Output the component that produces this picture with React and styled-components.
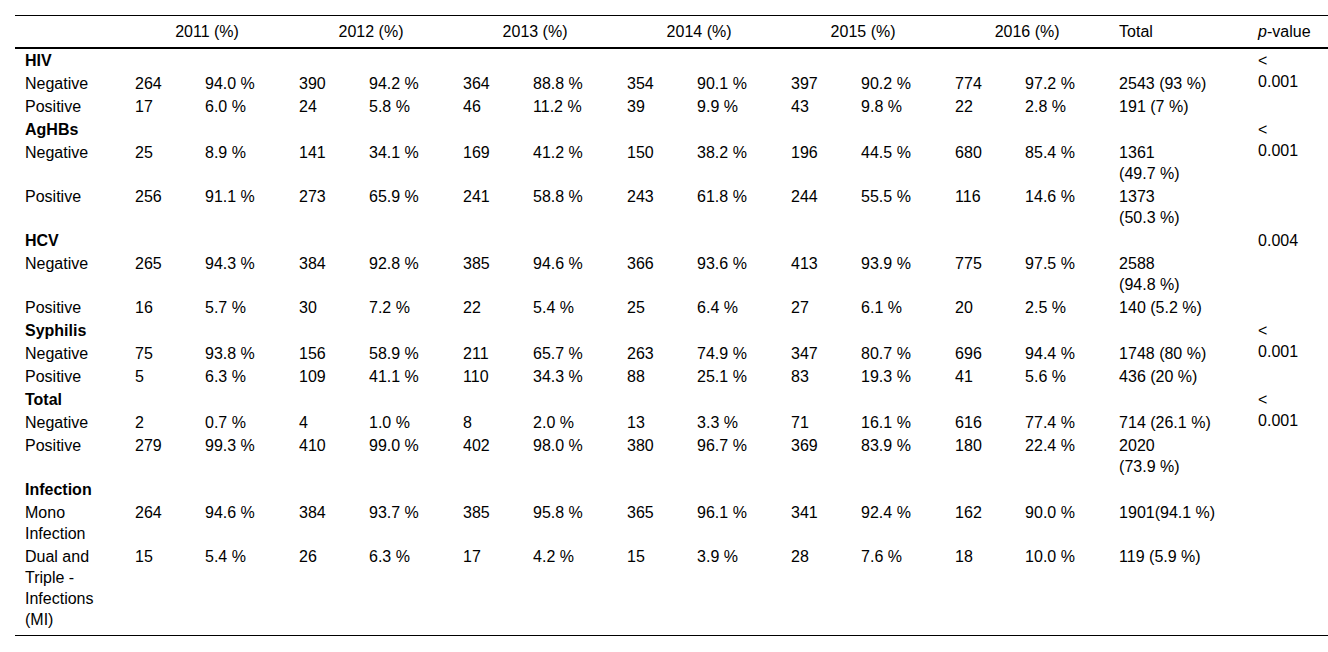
import React from 'react'
import styled, { createGlobalStyle } from 'styled-components'

const GlobalStyle = createGlobalStyle`
  html, body {
    margin: 0;
    padding: 0;
    background: #fff;
  }
  body {
    font-family: "Liberation Sans", Arial, sans-serif;
    color: #000;
  }
`

const Page = styled.div`
  padding: 15px 0 0 15px;
`

const Table = styled.table`
  width: 1313px;
  table-layout: fixed;
  border-collapse: collapse;
  font-size: 16px;
  line-height: 21px;
  border-top: 1px solid #000;
  border-bottom: 1px solid #000;
`

const HeadRow = styled.tr`
  border-bottom: 2px solid #000;
`

const Th = styled.th`
  font-weight: normal;
  text-align: ${({ center }) => (center ? 'center' : 'left')};
  padding: 5px 10px;
  white-space: nowrap;
`

const Td = styled.td`
  vertical-align: top;
  text-align: left;
  padding: 1px 10px ${({ last }) => (last ? '5px' : '1px')};
  white-space: pre-line;
  font-weight: ${({ bold }) => (bold ? 'bold' : 'normal')};
`

const years = ['2011', '2012', '2013', '2014', '2015', '2016']

const sections = [
  {
    title: 'HIV',
    p: '<\n0.001',
    rows: [
      ['Negative', '264', '94.0 %', '390', '94.2 %', '364', '88.8 %', '354', '90.1 %', '397', '90.2 %', '774', '97.2 %', '2543 (93 %)'],
      ['Positive', '17', '6.0 %', '24', '5.8 %', '46', '11.2 %', '39', '9.9 %', '43', '9.8 %', '22', '2.8 %', '191 (7 %)'],
    ],
  },
  {
    title: 'AgHBs',
    p: '<\n0.001',
    rows: [
      ['Negative', '25', '8.9 %', '141', '34.1 %', '169', '41.2 %', '150', '38.2 %', '196', '44.5 %', '680', '85.4 %', '1361\n(49.7 %)'],
      ['Positive', '256', '91.1 %', '273', '65.9 %', '241', '58.8 %', '243', '61.8 %', '244', '55.5 %', '116', '14.6 %', '1373\n(50.3 %)'],
    ],
  },
  {
    title: 'HCV',
    p: '0.004',
    rows: [
      ['Negative', '265', '94.3 %', '384', '92.8 %', '385', '94.6 %', '366', '93.6 %', '413', '93.9 %', '775', '97.5 %', '2588\n(94.8 %)'],
      ['Positive', '16', '5.7 %', '30', '7.2 %', '22', '5.4 %', '25', '6.4 %', '27', '6.1 %', '20', '2.5 %', '140 (5.2 %)'],
    ],
  },
  {
    title: 'Syphilis',
    p: '<\n0.001',
    rows: [
      ['Negative', '75', '93.8 %', '156', '58.9 %', '211', '65.7 %', '263', '74.9 %', '347', '80.7 %', '696', '94.4 %', '1748 (80 %)'],
      ['Positive', '5', '6.3 %', '109', '41.1 %', '110', '34.3 %', '88', '25.1 %', '83', '19.3 %', '41', '5.6 %', '436 (20 %)'],
    ],
  },
  {
    title: 'Total',
    p: '<\n0.001',
    rows: [
      ['Negative', '2', '0.7 %', '4', '1.0 %', '8', '2.0 %', '13', '3.3 %', '71', '16.1 %', '616', '77.4 %', '714 (26.1 %)'],
      ['Positive', '279', '99.3 %', '410', '99.0 %', '402', '98.0 %', '380', '96.7 %', '369', '83.9 %', '180', '22.4 %', '2020\n(73.9 %)'],
    ],
  },
  {
    title: 'Infection',
    p: '',
    rows: [
      ['Mono\nInfection', '264', '94.6 %', '384', '93.7 %', '385', '95.8 %', '365', '96.1 %', '341', '92.4 %', '162', '90.0 %', '1901(94.1 %)'],
      ['Dual and\nTriple -\nInfections\n(MI)', '15', '5.4 %', '26', '6.3 %', '17', '4.2 %', '15', '3.9 %', '28', '7.6 %', '18', '10.0 %', '119 (5.9 %)'],
    ],
  },
]

const App = () => {
  return (
    <Page>
      <GlobalStyle />
      <Table>
        <colgroup>
          <col style={{ width: 110 }} />
          {years.map((y) => (
            <React.Fragment key={y}>
              <col style={{ width: 70 }} />
              <col style={{ width: 94 }} />
            </React.Fragment>
          ))}
          <col style={{ width: 139 }} />
          <col style={{ width: 80 }} />
        </colgroup>
        <thead>
          <HeadRow>
            <Th />
            {years.map((y) => (
              <Th key={y} colSpan={2} center>
                {y} (%)
              </Th>
            ))}
            <Th>Total</Th>
            <Th>
              <i>p</i>-value
            </Th>
          </HeadRow>
        </thead>
        <tbody>
          {sections.map((s, si) => {
            const lastSection = si === sections.length - 1
            return (
              <React.Fragment key={s.title}>
                <tr>
                  <Td bold>{s.title}</Td>
                  <Td colSpan={13} />
                  <Td rowSpan={s.rows.length + 1} last={lastSection}>
                    {s.p}
                  </Td>
                </tr>
                {s.rows.map((r, ri) => {
                  const last = lastSection && ri === s.rows.length - 1
                  return (
                    <tr key={ri}>
                      {r.map((c, ci) => (
                        <Td key={ci} last={last}>
                          {c}
                        </Td>
                      ))}
                    </tr>
                  )
                })}
              </React.Fragment>
            )
          })}
        </tbody>
      </Table>
    </Page>
  )
}

export default App
